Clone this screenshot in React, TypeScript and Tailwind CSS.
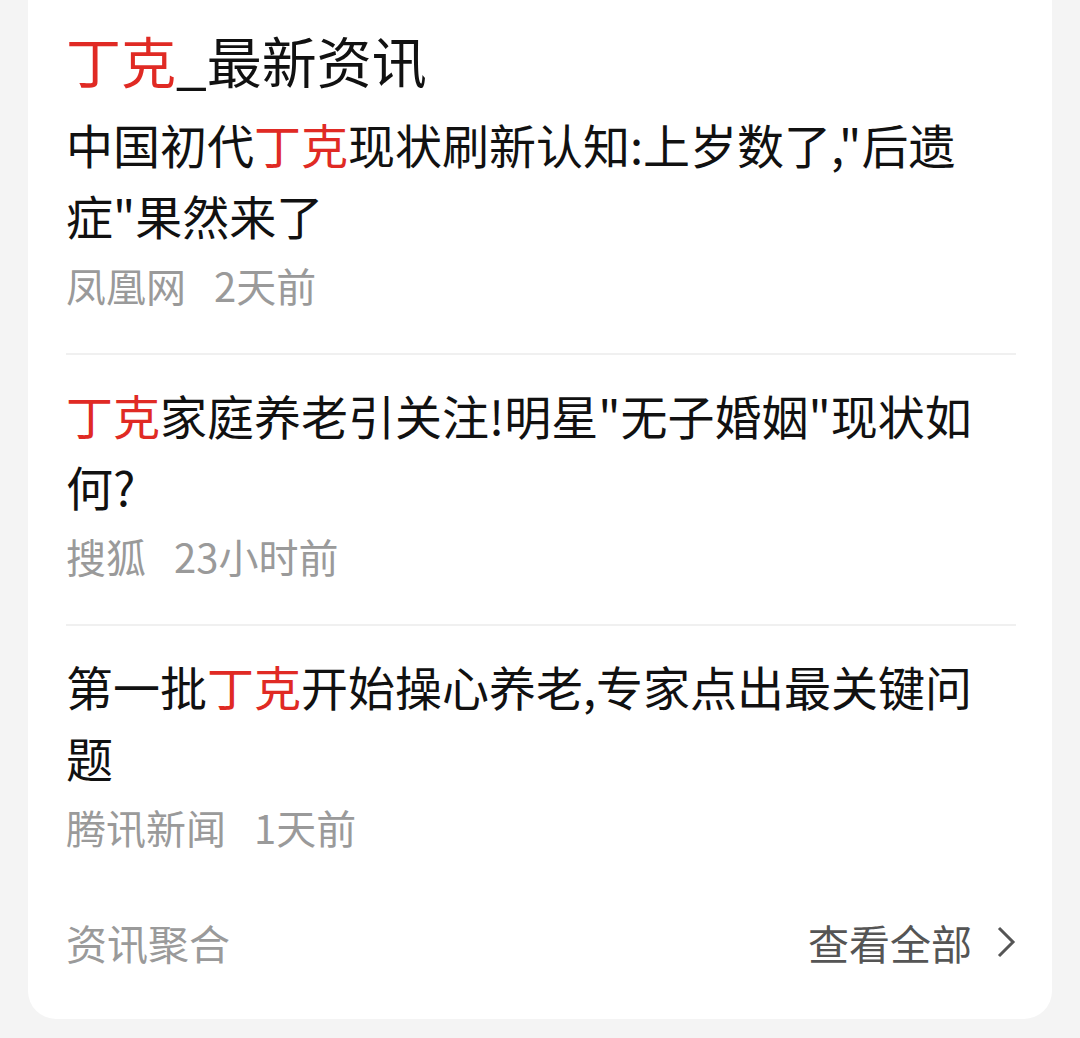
import React from 'react';

type NewsItem = {
    before: string;
    keyword: string;
    after: string;
    source: string;
    time: string;
};

const items: NewsItem[] = [
    { before: '中国初代', keyword: '丁克', after: '现状刷新认知:上岁数了,"后遗症"果然来了', source: '凤凰网', time: '2天前' },
    { before: '', keyword: '丁克', after: '家庭养老引关注!明星"无子婚姻"现状如何?', source: '搜狐', time: '23小时前' },
    { before: '第一批', keyword: '丁克', after: '开始操心养老,专家点出最关键问题', source: '腾讯新闻', time: '1天前' },
];

const NewsRow = ({ item, last }: { item: NewsItem; last: boolean }) => (
    <div className={`pt-[24px] pb-[40px] ${last ? '' : 'border-b-2 border-[#f0f0f0]'}`}>
        <p className="text-[47px] leading-[71px] text-[#111] pr-[14px]">
            {item.before}
            <span className="text-[#e02a24]">{item.keyword}</span>
            {item.after}
        </p>
        <div className="mt-[7px] flex items-center gap-[28px] text-[40px] leading-[56px] text-[#9a9a9a]">
            <span>{item.source}</span>
            <span>{item.time}</span>
        </div>
    </div>
);

export default function App() {
    return (
        <div
            className="min-h-[1038px] w-[1080px] bg-[#f4f4f4] overflow-hidden"
            style={{ fontFamily: '"Noto Sans CJK SC", "Noto Sans", sans-serif' }}
        >
            <div className="mx-[28px] -mt-[30px] bg-white rounded-[28px] pl-[38px] pr-[36px] pt-[52px] pb-[49px]">
                <h1 className="text-[55px] leading-[74px] text-[#111]">
                    <span className="text-[#e02a24]">丁克</span>_最新资讯
                </h1>
                <div className="-mt-[12px]">
                    {items.map((item, i) => (
                        <NewsRow key={i} item={item} last={i === items.length - 1} />
                    ))}
                </div>
                <div className="mt-[19px] flex items-center justify-between text-[41px] leading-[56px]">
                    <span className="text-[#9a9a9a]">资讯聚合</span>
                    <span className="flex items-center gap-[24px] text-[#555]">
                        查看全部
                        <svg width="20" height="32" viewBox="0 0 20 32" fill="none" stroke="#555" strokeWidth="3">
                            <polyline points="3,2 17,16 3,30" />
                        </svg>
                    </span>
                </div>
            </div>
        </div>
    );
}
